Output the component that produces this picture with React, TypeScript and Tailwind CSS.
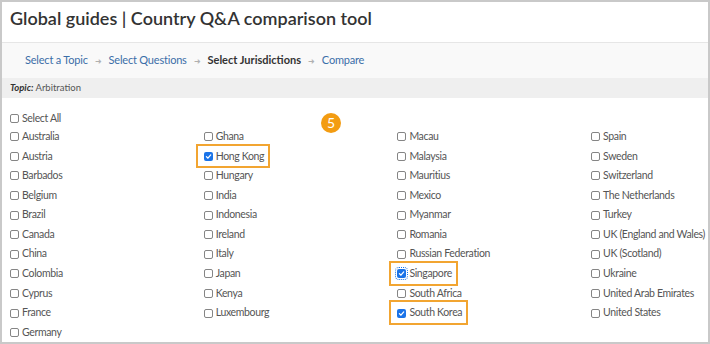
import React from "react";

const cols: string[][] = [
  ["Australia", "Austria", "Barbados", "Belgium", "Brazil", "Canada", "China", "Colombia", "Cyprus", "France", "Germany"],
  ["Ghana", "Hong Kong", "Hungary", "India", "Indonesia", "Ireland", "Italy", "Japan", "Kenya", "Luxembourg"],
  ["Macau", "Malaysia", "Mauritius", "Mexico", "Myanmar", "Romania", "Russian Federation", "Singapore", "South Africa", "South Korea"],
  ["Spain", "Sweden", "Switzerland", "The Netherlands", "Turkey", "UK (England and Wales)", "UK (Scotland)", "Ukraine", "United Arab Emirates", "United States"],
];

const checked = new Set(["Hong Kong", "Singapore", "South Korea"]);
const focused = "Singapore";

function Box({ on, focus }: { on: boolean; focus?: boolean }) {
  if (on) {
    return (
      <span className={"relative inline-flex w-[9px] h-[9px] rounded-[2px] bg-[#1a73e8] items-center justify-center shrink-0 " + (focus ? "outline outline-1 outline-dotted outline-[#1a73e8] outline-offset-1" : "")}>
        <svg width="7" height="7" viewBox="0 0 10 10">
          <path d="M2 5.2 L4.2 7.4 L8.2 2.8" fill="none" stroke="white" strokeWidth="1.8" strokeLinecap="round" strokeLinejoin="round" />
        </svg>
      </span>
    );
  }
  return <span className="inline-block w-[9px] h-[9px] rounded-[2px] border border-[#858585] bg-white shrink-0" />;
}

function Item({ name }: { name: string }) {
  const on = checked.has(name);
  return (
    <div className="h-[19.6px] flex items-center">
      <span className="relative flex items-center gap-[3px]">
        <Box on={on} focus={name === focused} />
        <span>{name}</span>
        {on && (
          <span className="absolute -left-[8px] -right-[6px] -top-[5px] -bottom-[4px] border-2 border-[#f2a531] pointer-events-none" />
        )}
      </span>
    </div>
  );
}

function Arrow() {
  return <span className="mx-[7px] text-[#b0b0b0] text-[8px]">➜</span>;
}

export default function App() {
  return (
    <div className="w-[710px] h-[344px] bg-white border-2 border-[#c9c9c9] overflow-hidden" style={{ fontFamily: "Lato, 'Noto Sans', sans-serif" }}>
      <div className="h-[40px] pt-[4px] pl-[8px] text-[18px] font-semibold text-[#333] leading-[24px]">
        Global guides | Country Q&amp;A comparison tool
      </div>
      <div className="h-[36px] bg-[#f9f9f9] border-t border-[#e6e6e6] flex items-center pl-[23px] text-[11px] tracking-[-0.2px] text-[#3b6ea8]">
        <span>Select a Topic</span>
        <Arrow />
        <span>Select Questions</span>
        <Arrow />
        <span className="font-bold tracking-[0px] text-[#333]">Select Jurisdictions</span>
        <Arrow />
        <span>Compare</span>
      </div>
      <div className="h-[20px] bg-[#efefef] flex items-center pl-[8px] text-[9.5px] text-[#555]">
        <span className="font-bold italic text-[#333]">Topic:</span>
        <span className="ml-[2px]">Arbitration</span>
      </div>
      <div className="relative pl-[8px] pt-[12px] text-[10.5px] tracking-[-0.35px] text-[#555]">
        <div className="h-[17px] flex items-center gap-[3px]">
          <Box on={false} />
          <span>Select All</span>
        </div>
        <span className="absolute left-[319px] top-[15px] w-[20px] h-[20px] rounded-full bg-[#f39c12] text-white text-[14px] flex items-center justify-center leading-none">5</span>
        <div className="flex">
          {cols.map((c, i) => (
            <div key={i} className="w-[193.7px] shrink-0 flex flex-col">
              {c.map((n) => (
                <Item key={n} name={n} />
              ))}
            </div>
          ))}
        </div>
      </div>
    </div>
  );
}
